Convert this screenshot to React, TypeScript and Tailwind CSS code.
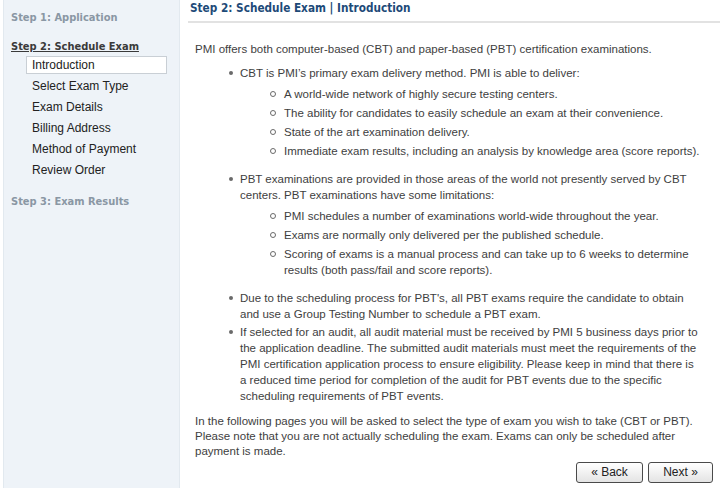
import React from 'react';

const headFont = { fontFamily: '"DejaVu Sans Condensed", "DejaVu Sans", sans-serif' };
const bodyFont = { fontFamily: '"Liberation Sans", Arial, sans-serif' };

const steps = ['Introduction', 'Select Exam Type', 'Exam Details', 'Billing Address', 'Method of Payment', 'Review Order'];

const Disc: React.FC = () => (
  <span className="mt-[6px] mr-[7px] ml-[-11px] h-[4px] w-[4px] shrink-0 rounded-full bg-[#6a6a6a]" />
);

const Circle: React.FC = () => (
  <span className="mt-[5px] mr-[8px] ml-[-14px] h-[6px] w-[6px] shrink-0 rounded-full border border-[#6a6a6a]" />
);

const Bullet: React.FC<{ children: React.ReactNode; sub?: string[] }> = ({ children, sub }) => (
  <li className="flex flex-col">
    <div className="flex">
      <Disc />
      <span>{children}</span>
    </div>
    {sub && (
      <ul className="mt-[5px] mb-[10px] flex flex-col gap-[3px] pl-[44px]">
        {sub.map((s, i) => (
          <li key={i} className="flex">
            <Circle />
            <span>{s}</span>
          </li>
        ))}
      </ul>
    )}
  </li>
);

const Sidebar: React.FC = () => (
  <div className="ml-[3px] w-[177px] shrink-0 border-x border-[#e2e9ef] bg-[#eef3f8] text-[11px]" style={headFont}>
    <div className="pl-[7px] pt-[10px] font-bold leading-[16px] text-[#8a97a4]">Step 1: Application</div>
    <div className="pl-[7px] pt-[13px] font-bold leading-[16px] text-[#3a3a3a] underline">Step 2: Schedule Exam</div>
    <ul className="mt-[1px] flex flex-col gap-[3px] text-[12px]" style={bodyFont}>
      {steps.map((s, i) => (
        <li
          key={s}
          className={`ml-[22px] h-[18px] w-[141px] pl-[5px] leading-[16px] text-[#222] ${
            i === 0 ? 'border border-[#c9cfd5] bg-white' : 'border border-transparent'
          }`}
        >
          {s}
        </li>
      ))}
    </ul>
    <div className="pl-[7px] pt-[15px] font-bold leading-[16px] text-[#8a97a4]">Step 3: Exam Results</div>
  </div>
);

const Button: React.FC<{ children: React.ReactNode; w: string }> = ({ children, w }) => (
  <button
    className={`h-[21px] ${w} rounded-[3px] border border-[#4a4a4a] bg-gradient-to-b from-white to-[#e4e4e4] text-[12px] leading-[19px] text-[#222]`}
    style={bodyFont}
  >
    {children}
  </button>
);

export default function App() {
  return (
    <div className="flex h-[488px] w-[720px] overflow-hidden bg-white">
      <Sidebar />
      <div className="flex min-w-0 flex-1 flex-col">
        <div className="pl-[10px] text-[11.7px] font-bold leading-[16px] text-[#1d4a78]" style={headFont}>
          Step 2: Schedule Exam | Introduction
        </div>
        <div className="ml-[8px] mt-[5px] h-[2px] bg-[#e2e2e2]" />
        <div className="pl-[15px] pr-[7px] pt-[18px] text-[11.5px] leading-[16px] text-[#3e3e3e]" style={bodyFont}>
          <p>PMI offers both computer-based (CBT) and paper-based (PBT) certification examinations.</p>
          <ul className="mt-[8px] flex flex-col gap-[2px] pl-[45px]">
            <Bullet
              sub={[
                'A world-wide network of highly secure testing centers.',
                'The ability for candidates to easily schedule an exam at their convenience.',
                'State of the art examination delivery.',
                'Immediate exam results, including an analysis by knowledge area (score reports).',
              ]}
            >
              CBT is PMI’s primary exam delivery method. PMI is able to deliver:
            </Bullet>
            <Bullet
              sub={[
                'PMI schedules a number of examinations world-wide throughout the year.',
                'Exams are normally only delivered per the published schedule.',
                'Scoring of exams is a manual process and can take up to 6 weeks to determine results (both pass/fail and score reports).',
              ]}
            >
              PBT examinations are provided in those areas of the world not presently served by CBT centers. PBT examinations have some limitations:
            </Bullet>
            <Bullet>
              Due to the scheduling process for PBT's, all PBT exams require the candidate to obtain
              <br />
              and use a Group Testing Number to schedule a PBT exam.
            </Bullet>
            <Bullet>
              If selected for an audit, all audit material must be received by PMI 5 business days prior to the application deadline. The submitted audit materials must meet the requirements of the PMI certification application process to ensure eligibility. Please keep in mind that there is
              <br />
              a reduced time period for completion of the audit for PBT events due to the specific scheduling requirements of PBT events.
            </Bullet>
          </ul>
          <p className="mt-[10px] leading-[15px]">
            In the following pages you will be asked to select the type of exam you wish to take (CBT or PBT). Please note that you are not actually scheduling the exam. Exams can only be scheduled after payment is made.
          </p>
          <div className="mt-[3px] flex justify-end gap-[5px]">
            <Button w="w-[67px]">« Back</Button>
            <Button w="w-[65px]">Next »</Button>
          </div>
        </div>
      </div>
    </div>
  );
}
